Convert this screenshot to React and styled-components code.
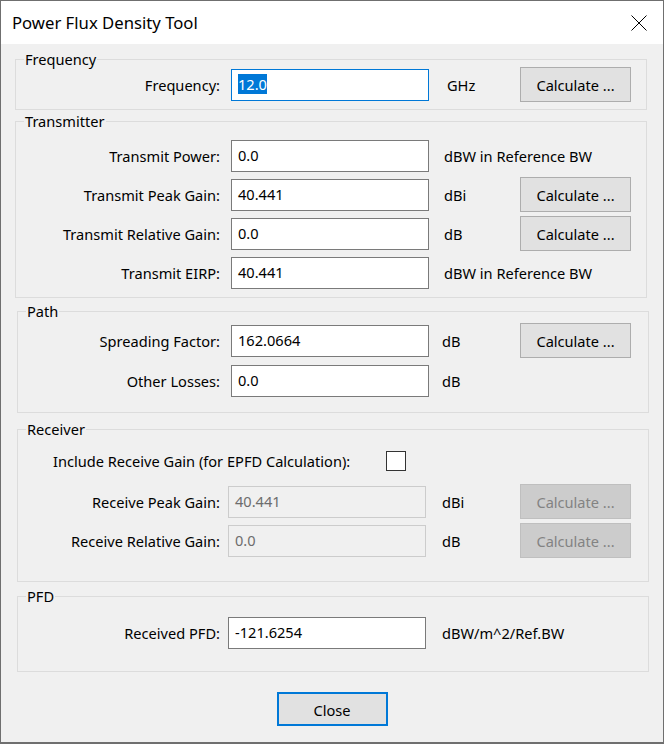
import styled, { createGlobalStyle } from 'styled-components';

const Global = createGlobalStyle`
  html, body {
    margin: 0;
    padding: 0;
    background: #f0f0f0;
  }
  body {
    font-family: "Noto Sans", "Open Sans", sans-serif;
    font-size: 14.6px;
    color: #000;
  }
`;

const Window = styled.div`
  box-sizing: border-box;
  width: 664px;
  height: 744px;
  border: 1px solid #6f6f6f;
  border-bottom-width: 2px;
  background: #f0f0f0;
  display: flex;
  flex-direction: column;
`;

const TitleBar = styled.div`
  height: 43px;
  background: #fff;
  display: flex;
  align-items: center;
  justify-content: space-between;
  padding: 0 16px 0 11px;
`;

const Title = styled.div`
  font-size: 16.7px;
  padding-bottom: 1px;
`;

const Body = styled.div`
  padding: 0 0 0 14px;
  display: flex;
  flex-direction: column;
`;

const Group = styled.fieldset`
  box-sizing: border-box;
  width: 632px;
  margin: ${p => p.$mt}px 0 0 ${p => p.$shift || 0}px;
  padding: ${p => p.$pt}px 0 ${p => p.$pb}px 0;
  border: 1px solid #dcdcdc;
  min-width: 0;
  display: flex;
  flex-direction: column;
  gap: ${p => p.$gap || 4}px;
`;

const Legend = styled.legend`
  font-size: 14.6px;
  line-height: 16px;
  padding: 0 1px;
  margin-left: 8px;
`;

const Row = styled.div`
  display: grid;
  grid-template-columns: ${p => p.$label}px 198px ${p => p.$unit}px 111px;
  align-items: center;
  height: 35px;
  margin-top: ${p => p.$mt || 0}px;
`;

const Label = styled.div`
  text-align: right;
  padding-right: ${p => p.$gap}px;
  white-space: nowrap;
`;

const Field = styled.div`
  box-sizing: border-box;
  height: 32px;
  display: flex;
  align-items: center;
  padding: 0 0 1px 6px;
  background: ${p => (p.$disabled ? '#f0f0f0' : '#fff')};
  border: 1px solid ${p => (p.$focused ? '#0078d7' : p.$disabled ? '#cccccc' : '#7a7a7a')};
  color: ${p => (p.$disabled ? '#6d6d6d' : '#000')};
`;

const Selected = styled.span`
  background: #0078d7;
  color: #fff;
`;

const Unit = styled.div`
  padding-left: ${p => p.$gap}px;
  white-space: nowrap;
`;

const Button = styled.button`
  box-sizing: border-box;
  width: ${p => p.$w || 111}px;
  height: ${p => (p.$default ? 34 : 35)}px;
  font: inherit;
  font-size: 14.6px;
  color: ${p => (p.disabled ? '#838383' : '#000')};
  background: ${p => (p.disabled ? '#cccccc' : '#e1e1e1')};
  border: ${p => (p.$default ? '2px solid #0078d7' : `1px solid ${p.disabled ? '#bfbfbf' : '#adadad'}`)};
  padding: 1px 0 0;
`;

const CheckRow = styled.div`
  display: grid;
  grid-template-columns: 368px 20px;
  align-items: center;
  height: 20px;
`;

const CheckText = styled.div`
  padding-left: 35px;
  white-space: nowrap;
`;

const Check = styled.div`
  box-sizing: border-box;
  width: 20px;
  height: 20px;
  background: #fff;
  border: 1px solid #333;
`;

const Footer = styled.div`
  display: flex;
  justify-content: center;
  margin-top: 20px;
  padding-right: 14px;
`;

const CloseIcon = () => (
  <svg width="16" height="16" viewBox="0 0 16 16">
    <path d="M0.5 0.5 L15.5 15.5 M15.5 0.5 L0.5 15.5" stroke="#000" strokeWidth="1" fill="none" />
  </svg>
);

const FieldRow = ({ label, value, unit, calc, disabled, focused, cols }) => (
  <Row $label={cols.label} $unit={cols.unit} $mt={cols.mt}>
    <Label $gap={cols.labelGap}>{label}</Label>
    <Field $disabled={disabled} $focused={focused}>
      {focused ? <Selected>{value}</Selected> : value}
    </Field>
    <Unit $gap={cols.unitGap}>{unit}</Unit>
    {calc ? <Button disabled={disabled}>Calculate ...</Button> : <span />}
  </Row>
);

const A = { label: 215, labelGap: 11, unit: 91, unitGap: 15 };
const B = { label: 213, labelGap: 11, unit: 91, unitGap: 13 };
const C = { label: 210, labelGap: 8, unit: 94, unitGap: 16 };

export default function App() {
  return (
    <>
      <Global />
      <Window>
        <TitleBar>
          <Title>Power Flux Density Tool</Title>
          <CloseIcon />
        </TitleBar>
        <Body>
          <Group $mt={7} $pt={0} $pb={7}>
            <Legend>Frequency</Legend>
            <FieldRow cols={{ ...A, unitGap: 18 }} label="Frequency:" value="12.0" unit="GHz" calc focused />
          </Group>

          <Group $mt={3} $pt={9} $pb={7}>
            <Legend>Transmitter</Legend>
            <FieldRow cols={A} label="Transmit Power:" value="0.0" unit="dBW in Reference BW" />
            <FieldRow cols={A} label="Transmit Peak Gain:" value="40.441" unit="dBi" calc />
            <FieldRow cols={A} label="Transmit Relative Gain:" value="0.0" unit="dB" calc />
            <FieldRow cols={A} label="Transmit EIRP:" value="40.441" unit="dBW in Reference BW" />
          </Group>

          <Group $mt={5} $shift={2} $pt={4} $pb={14} $gap={5}>
            <Legend>Path</Legend>
            <FieldRow cols={B} label="Spreading Factor:" value="162.0664" unit="dB" calc />
            <FieldRow cols={B} label="Other Losses:" value="0.0" unit="dB" />
          </Group>

          <Group $mt={8} $shift={2} $pt={14} $pb={23} $gap={4}>
            <Legend>Receiver</Legend>
            <CheckRow>
              <CheckText>Include Receive Gain (for EPFD Calculation):</CheckText>
              <Check />
            </CheckRow>
            <FieldRow cols={{ ...C, mt: 9 }} label="Receive Peak Gain:" value="40.441" unit="dBi" calc disabled />
            <FieldRow cols={C} label="Receive Relative Gain:" value="0.0" unit="dB" calc disabled />
          </Group>

          <Group $mt={6} $shift={2} $pt={11} $pb={21}>
            <Legend>PFD</Legend>
            <FieldRow cols={C} label="Received PFD:" value="-121.6254" unit="dBW/m^2/Ref.BW" />
          </Group>

          <Footer>
            <Button $default>Close</Button>
          </Footer>
        </Body>
      </Window>
    </>
  );
}
